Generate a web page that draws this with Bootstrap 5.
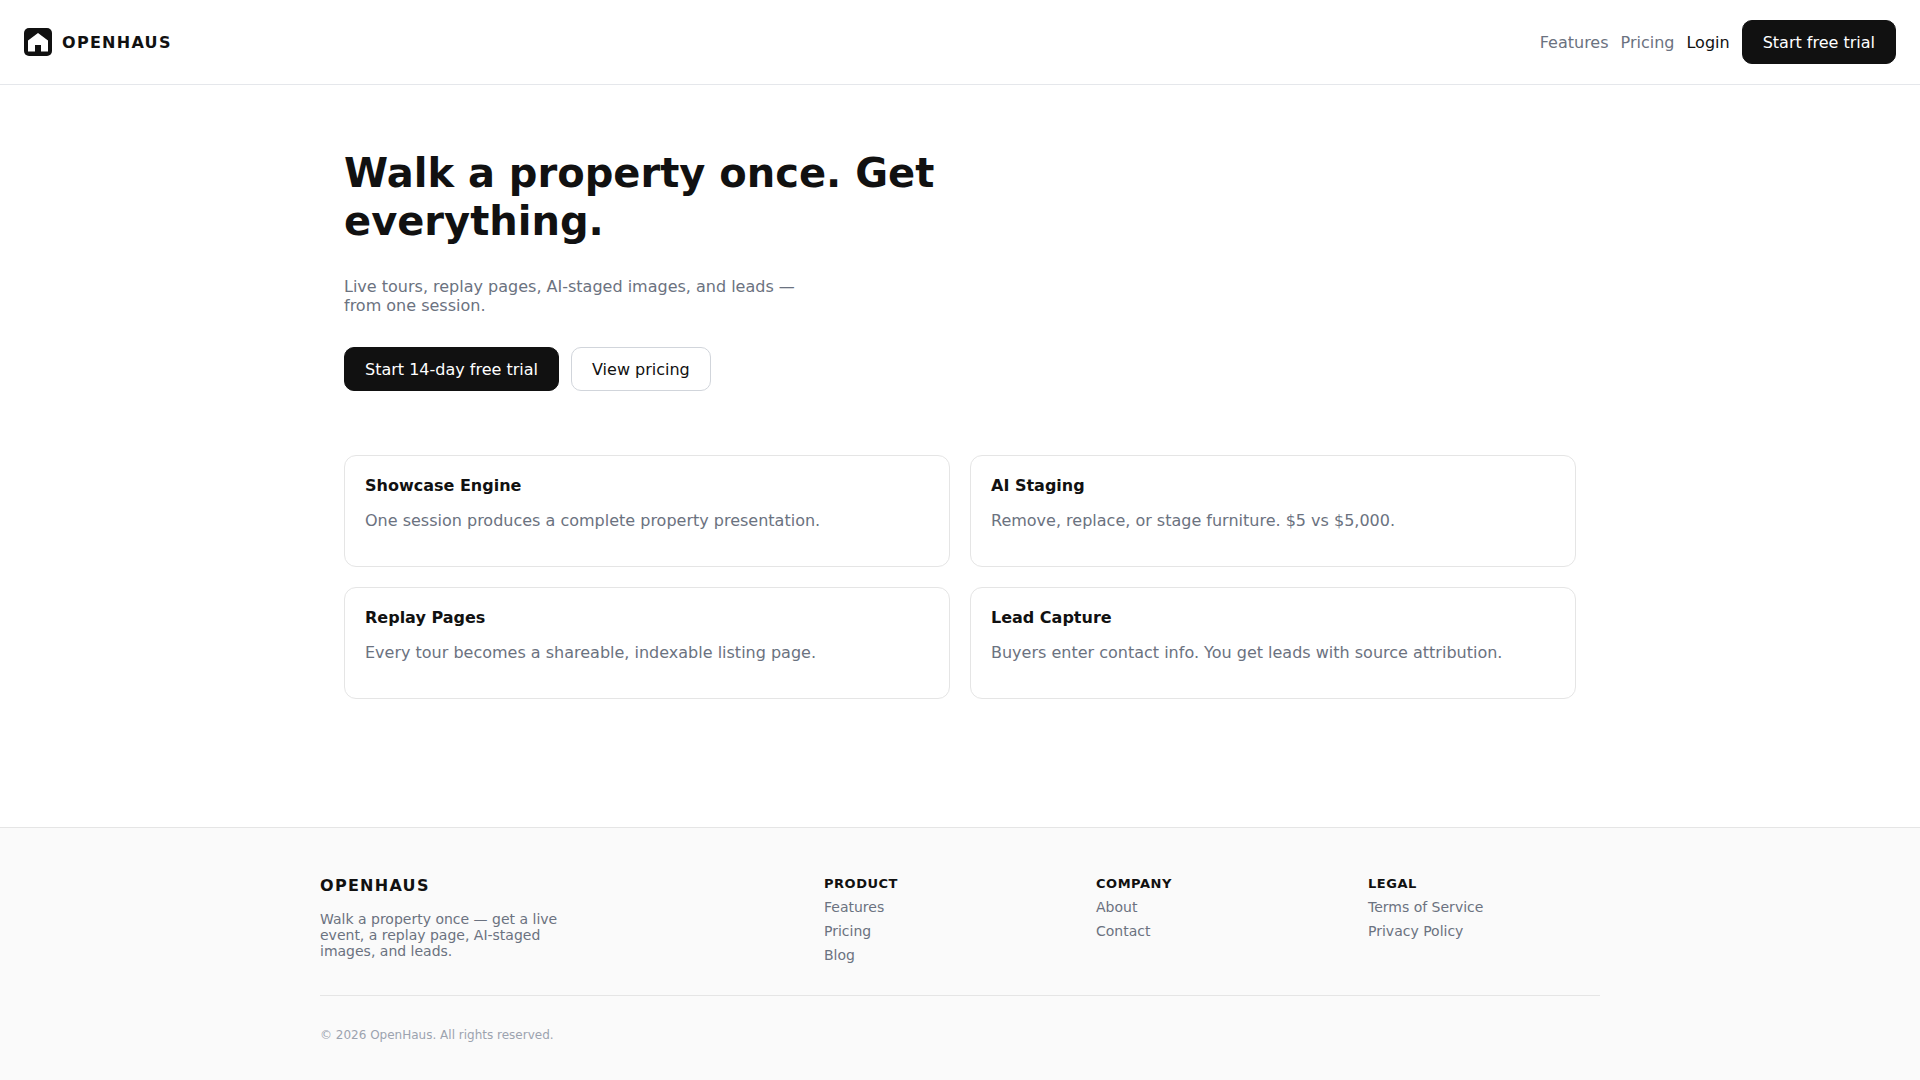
<!DOCTYPE html>
<html lang="en">
<head>
<meta charset="utf-8">
<meta name="viewport" content="width=device-width, initial-scale=1">
<title>OpenHaus</title>
<link href="https://cdn.jsdelivr.net/npm/bootstrap@5.3.0/dist/css/bootstrap.min.css" rel="stylesheet">
<style>
  :root { --ink: #111; --muted: #6b7280; --line: #e5e7eb; --rule: #e5e5e5; }
  body { font-family: "DejaVu Sans", sans-serif; font-size: 16px; line-height: 19px; color: var(--ink); background: #fff; }
  a { text-decoration: none; }
  .site-header { padding: 20px 24px; border-bottom: 1px solid var(--line); }
  .wordmark { font-weight: 700; letter-spacing: .08em; color: var(--ink); }
  .brand-link { gap: 10px; }
  .site-nav { gap: 12px; }
  .muted { color: var(--muted); }
  .ink { color: var(--ink); }
  .btn-oh { --bs-btn-padding-x: 20px; --bs-btn-padding-y: 0; --bs-btn-font-size: 16px; --bs-btn-line-height: 19px; --bs-btn-border-radius: 10px;
    display: inline-flex; align-items: center; min-height: 44px; }
  .btn-solid { --bs-btn-color: #fff; --bs-btn-bg: #111; --bs-btn-border-color: #111; --bs-btn-hover-color: #fff; --bs-btn-hover-bg: #333; --bs-btn-hover-border-color: #333; }
  .btn-line { --bs-btn-color: #111; --bs-btn-bg: #fff; --bs-btn-border-color: #d1d5db; --bs-btn-hover-color: #111; --bs-btn-hover-bg: #f3f4f6; --bs-btn-hover-border-color: #d1d5db; }
  .wrap { width: 100%; max-width: 1280px; margin: 0 auto; }
  .hero { padding: 64px 24px; }
  .hero h1 { max-width: 720px; font-size: 40px; line-height: 48px; font-weight: 700; margin-bottom: 32px; }
  .intro { max-width: 480px; margin-bottom: 32px; }
  .actions { gap: 12px; margin-bottom: 64px; }
  .features { --bs-gutter-x: 20px; --bs-gutter-y: 20px; }
  .feature { --bs-card-border-color: var(--rule); --bs-card-border-radius: 12px; --bs-card-spacer-x: 20px; --bs-card-spacer-y: 20px; }
  .feature h2 { font-size: 16px; line-height: 19px; font-weight: 700; margin-bottom: 16px; }
  .feature p { margin-bottom: 16px; }
  .site-main { margin-bottom: 64px; }
  .site-footer { background: #fafafa; border-top: 1px solid var(--rule); padding: 48px 24px 32px; font-size: 14px; line-height: 16px; }
  .foot-grid { display: grid; grid-template-columns: 2fr 1fr 1fr 1fr; gap: 40px; }
  .foot-grid .wordmark { font-size: 16px; line-height: 19px; margin-bottom: 16px; }
  .about { max-width: 260px; }
  .foot-grid h3 { font-size: 13px; line-height: 15px; font-weight: 700; letter-spacing: .04em; margin: 0; }
  .legal-line { margin-top: 32px; border-top: 1px solid var(--rule); padding-top: 32px; font-size: 12px; line-height: 14px; color: #9ca3af; }
  @media (max-width: 767px) { .foot-grid { grid-template-columns: 1fr 1fr; } }
</style>
</head>
<body class="d-flex flex-column min-vh-100">
<header class="site-header d-flex flex-wrap align-items-center justify-content-between">
  <a href="#" class="brand-link d-flex align-items-center">
    <svg width="28" height="28" viewBox="0 0 28 28" aria-hidden="true">
      <rect width="28" height="28" rx="5" fill="#111"/>
      <path d="M14 5 4 12.500V23.500H11V17H17V23.500H24V12.500Z" fill="#fff"/>
    </svg>
    <span class="wordmark">OPENHAUS</span>
  </a>
  <nav class="site-nav d-flex flex-wrap align-items-center">
    <a href="#features" class="muted">Features</a>
    <a href="#" class="muted">Pricing</a>
    <a href="#" class="ink">Login</a>
    <a href="#" class="btn btn-oh btn-solid">Start free trial</a>
  </nav>
</header>
<main class="site-main">
  <div class="wrap hero">
    <h1>Walk a property once. Get everything.</h1>
    <p class="intro muted">Live tours, replay pages, AI-staged images, and leads — from one session.</p>
    <div class="actions d-flex flex-wrap">
      <a href="#" class="btn btn-oh btn-solid">Start 14-day free trial</a>
      <a href="#" class="btn btn-oh btn-line">View pricing</a>
    </div>
    <section id="features" class="row row-cols-1 row-cols-md-2 features">
      <div class="col"><article class="card feature h-100"><div class="card-body"><h2>Showcase Engine</h2><p class="muted">One session produces a complete property presentation.</p></div></article></div>
      <div class="col"><article class="card feature h-100"><div class="card-body"><h2>AI Staging</h2><p class="muted">Remove, replace, or stage furniture. $5 vs $5,000.</p></div></article></div>
      <div class="col"><article class="card feature h-100"><div class="card-body"><h2>Replay Pages</h2><p class="muted">Every tour becomes a shareable, indexable listing page.</p></div></article></div>
      <div class="col"><article class="card feature h-100"><div class="card-body"><h2>Lead Capture</h2><p class="muted">Buyers enter contact info. You get leads with source attribution.</p></div></article></div>
    </section>
  </div>
</main>
<footer class="site-footer flex-grow-1">
  <div class="wrap">
    <div class="foot-grid">
      <div>
        <div class="wordmark">OPENHAUS</div>
        <p class="about muted mb-0">Walk a property once — get a live event, a replay page, AI-staged images, and leads.</p>
      </div>
      <nav class="d-flex flex-column align-items-start gap-2" aria-label="Product">
        <h3>PRODUCT</h3>
        <a href="#features" class="muted">Features</a>
        <a href="#" class="muted">Pricing</a>
        <a href="#" class="muted">Blog</a>
      </nav>
      <nav class="d-flex flex-column align-items-start gap-2" aria-label="Company">
        <h3>COMPANY</h3>
        <a href="#" class="muted">About</a>
        <a href="#" class="muted">Contact</a>
      </nav>
      <nav class="d-flex flex-column align-items-start gap-2" aria-label="Legal">
        <h3>LEGAL</h3>
        <a href="#" class="muted">Terms of Service</a>
        <a href="#" class="muted">Privacy Policy</a>
      </nav>
    </div>
    <div class="legal-line">© 2026 OpenHaus. All rights reserved.</div>
  </div>
</footer>
<script src="https://cdn.jsdelivr.net/npm/bootstrap@5.3.0/dist/js/bootstrap.bundle.min.js"></script>
</body>
</html>
